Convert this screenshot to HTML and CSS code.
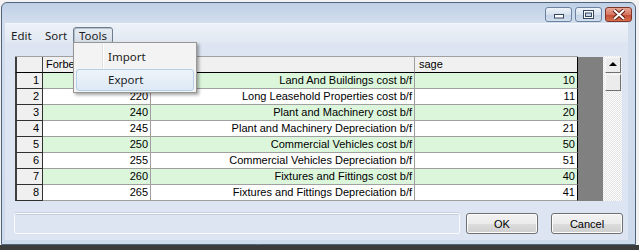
FILE: index.html
```html
<!DOCTYPE html>
<html>

<head>
    <meta charset="utf-8" />
    <title>Nominal codes</title>
    <link rel="stylesheet" href="styles.css">
</head>

<body>
    <div class="window">
        <!-- caption: only the three buttons are shown -->
        <div class="titlebar">
            <span class="cap-btn">
                <svg width="10" height="5" viewBox="0 0 10 5"><rect x="0.5" y="0.5" width="9" height="3.5" fill="#fff" stroke="#34465e" /></svg>
            </span>
            <span class="cap-btn">
                <svg width="11" height="9" viewBox="0 0 11 9"><rect x="0.5" y="0.5" width="10" height="8" fill="#fff" stroke="#34465e" /><rect x="2.5" y="3" width="6" height="3.5" fill="#c9d6e8" stroke="#34465e" /></svg>
            </span>
            <span class="cap-btn close">
                <svg width="14" height="11" viewBox="0 0 14 11"><path d="M2 1 L12 10 M12 1 L2 10" stroke="#5b1d12" stroke-width="4" /><path d="M2 1 L12 10 M12 1 L2 10" stroke="#fff" stroke-width="2" /></svg>
            </span>
        </div>

        <div class="client">
            <div class="menubar">
                <span class="menu-item edit">Edit</span>
                <span class="menu-item sort">Sort</span>
                <span class="menu-item tools open">Tools</span>

                <!-- the Tools menu is dropped down -->
                <ul class="dropdown">
                    <li>Import</li>
                    <li class="hover">Export</li>
                </ul>
            </div>

            <div class="content">
                <div class="grid">
                    <table class="data">
                        <colgroup>
                            <col class="c-rh">
                            <col class="c-code">
                            <col class="c-name">
                            <col class="c-sage">
                        </colgroup>
                        <tr class="head">
                            <th class="corner"></th>
                            <th>Forbe</th>
                            <th></th>
                            <th>sage</th>
                        </tr>
                        <tr class="alt">
                            <td class="rh">1</td>
                            <td class="num"></td>
                            <td class="num">Land And Buildings cost b/f</td>
                            <td class="num">10</td>
                        </tr>
                        <tr>
                            <td class="rh">2</td>
                            <td class="num">220</td>
                            <td class="num">Long Leasehold Properties cost b/f</td>
                            <td class="num">11</td>
                        </tr>
                        <tr class="alt">
                            <td class="rh">3</td>
                            <td class="num">240</td>
                            <td class="num">Plant and Machinery cost b/f</td>
                            <td class="num">20</td>
                        </tr>
                        <tr>
                            <td class="rh">4</td>
                            <td class="num">245</td>
                            <td class="num">Plant and Machinery Depreciation b/f</td>
                            <td class="num">21</td>
                        </tr>
                        <tr class="alt">
                            <td class="rh">5</td>
                            <td class="num">250</td>
                            <td class="num">Commercial Vehicles cost b/f</td>
                            <td class="num">50</td>
                        </tr>
                        <tr>
                            <td class="rh">6</td>
                            <td class="num">255</td>
                            <td class="num">Commercial Vehicles Depreciation b/f</td>
                            <td class="num">51</td>
                        </tr>
                        <tr class="alt">
                            <td class="rh">7</td>
                            <td class="num">260</td>
                            <td class="num">Fixtures and Fittings cost b/f</td>
                            <td class="num">40</td>
                        </tr>
                        <tr>
                            <td class="rh">8</td>
                            <td class="num">265</td>
                            <td class="num">Fixtures and Fittings Depreciation b/f</td>
                            <td class="num">41</td>
                        </tr>
                    </table>
                    <div class="filler"></div>
                    <div class="vscroll">
                        <span class="sb-btn up"></span>
                        <span class="sb-btn thumb"></span>
                    </div>
                </div>

                <div class="footer">
                    <div class="status"></div>
                    <button type="button" class="btn ok">OK</button>
                    <button type="button" class="btn cancel">Cancel</button>
                </div>
            </div>
        </div>
    </div>
</body>

</html>
```

FILE: styles.css
```css
body {
  margin: 0;
  height: 250px;
  /* what is behind the window: light on the right, dark below */
  background: linear-gradient(to bottom, #f2f2f2 245px, #3b3b3b 245px);
  font: 11px "Liberation Sans", Arial, sans-serif;
}

.window {
  box-sizing: border-box;
  width: 635px;
  height: 243px;
  margin: 2px 0 0 1px;
  border: 1px solid #51647d;
  border-radius: 6px 6px 0 0;
  background: linear-gradient(to bottom, #bfd0e6, #d2deee 20px, #cddaeb);
}

/* title bar */
.titlebar {
  height: 20px;
  display: flex;
  justify-content: flex-end;
  align-items: flex-start;
  padding: 4px 3px 0 0;
  box-sizing: border-box;
  gap: 3px;
}

.cap-btn {
  box-sizing: border-box;
  width: 27px;
  height: 15px;
  border: 1px solid #6a819f;
  border-radius: 3px;
  background: linear-gradient(to bottom, #eef3f9, #d6e1ee 50%, #c3d2e6 51%, #d3dfee);
  display: flex;
  align-items: center;
  justify-content: center;
}

.cap-btn:first-child svg {
  margin-top: 4px;
}

.cap-btn.close {
  border-color: #7e3427;
  background: linear-gradient(to bottom, #e9a797, #d67562 50%, #c44a33 51%, #d5704f);
}

.client {
  height: 217px;
  margin: 0 7px 0 3px;
  background: #dce5f1;
}

/* menu strip */
.menubar {
  position: relative;
  height: 20px;
  box-sizing: border-box;
  padding-top: 3px;
  display: flex;
  align-items: flex-start;
  border-top: 1px solid #f3f6fb;
  background: linear-gradient(to bottom, #edf2f8, #e1e8f2);
  font: 11.5px "Noto Sans", "Liberation Sans", sans-serif;
  color: #1c1c24;
}

.menu-item {
  box-sizing: border-box;
  height: 17px;
  line-height: 15px;
  padding-left: 5px;
  border: 1px solid transparent;
}

.edit {
  width: 30px;
}

.sort {
  width: 31px;
  margin-left: 4px;
}

.tools {
  width: 40px;
  margin-left: 3px;
}

.tools.open {
  border-color: #6e7c8e;
  border-radius: 3px;
  background: linear-gradient(to bottom, #e8edf3, #d5dde7);
  box-shadow: inset 1px 1px 0 #b4bfcc;
}

.dropdown {
  position: absolute;
  left: 68px;
  top: 18px;
  width: 124px;
  height: 51px;
  box-sizing: border-box;
  margin: 0;
  padding: 3px 2px 1px;
  list-style: none;
  border: 1px solid #979797;
  background: #f3f3f3;
  box-shadow: 2px 2px 3px rgba(0, 0, 0, 0.35);
}

/* the icon gutter of the menu */
.dropdown::before {
  content: "";
  position: absolute;
  left: 28px;
  top: 1px;
  bottom: 1px;
  width: 1px;
  border-right: 1px solid #fff;
  background: #e0e0e0;
}

.dropdown li {
  position: relative;
  box-sizing: border-box;
  height: 22px;
  line-height: 20px;
  padding-left: 31px;
  border: 1px solid transparent;
}

.dropdown li + li {
  margin-top: 1px;
}

.dropdown li.hover {
  border-color: #b4d0e6;
  border-radius: 3px;
  background: linear-gradient(to bottom, #eef4fa, #dde9f5);
}

/* form body */
.content {
  padding: 13px 6px 0 10px;
}

.grid {
  display: flex;
  height: 145px;
}

.data {
  border-collapse: separate;
  border-spacing: 0;
  table-layout: fixed;
  width: 563px;
  border-top: 1px solid #a0a0a0;
}

.c-rh {
  width: 28px;
}

.c-code {
  width: 108px;
}

.c-name {
  width: 264px;
}

.c-sage {
  width: 163px;
}

.data th,
.data td {
  box-sizing: border-box;
  height: 16px;
  padding: 0 2px;
  line-height: 15px;
  white-space: nowrap;
  overflow: hidden;
  border-right: 1px solid #a0a0a0;
  border-bottom: 1px solid #a0a0a0;
  font-weight: normal;
  color: #000;
  background: #fff;
}

.data .head th {
  background: #f0f0f0;
  text-align: left;
  padding-left: 3px;
  border-bottom-color: #000;
}

.data .head th:last-child {
  padding-left: 4px;
  border-right-color: #000;
}

.data .head th.corner {
  border-left: 2px solid #404040;
  border-right-color: #404040;
}

.data td.rh {
  background: #f0f0f0;
  text-align: right;
  padding-right: 3px;
  border-left: 2px solid #404040;
  border-right-color: #303030;
  border-bottom-color: #303030;
}

.data td.num {
  text-align: right;
}

.data td:last-child {
  border-right-color: #000;
}

.data tr.alt td {
  background: #dcf6dc;
}

.data tr.alt td.rh {
  background: #f0f0f0;
}

.filler {
  width: 25px;
  margin-top: 1px;
  background: #808080;
}

.vscroll {
  width: 19px;
  box-sizing: border-box;
  padding: 1px 1px 0 2px;
  background: repeating-conic-gradient(#fdfdfd 0 25%, #e4e4e4 0 50%) 0 0 / 2px 2px;
}

.sb-btn {
  display: block;
  box-sizing: border-box;
  height: 16px;
  border: 1px solid;
  border-color: #f8f8f8 #707070 #707070 #f8f8f8;
  background: #ececec;
}

.sb-btn.thumb {
  margin-top: 1px;
  height: 17px;
}

.sb-btn.up {
  position: relative;
}

/* up arrow */
.sb-btn.up::after {
  content: "";
  position: absolute;
  left: 3px;
  top: 4px;
  border-left: 4px solid transparent;
  border-right: 4px solid transparent;
  border-bottom: 4px solid #000;
}

.footer {
  display: flex;
  margin: 12px -1px 0 -1px;
}

.status {
  box-sizing: border-box;
  width: 446px;
  height: 21px;
  border: 1px solid #f9fbfd;
  border-radius: 2px;
  box-shadow: inset 0 1px 0 #c6d0dc, 0 -1px 0 #c9d3df;
}

.btn {
  box-sizing: border-box;
  width: 72px;
  height: 21px;
  padding: 0;
  border: 1px solid #707070;
  border-radius: 3px;
  background: linear-gradient(to bottom, #f3f3f3, #ebebeb 50%, #dddddd 51%, #cfcfcf);
  box-shadow: inset 0 0 0 1px #fcfcfc;
  font: 11px "Liberation Sans", Arial, sans-serif;
  color: #000;
}

.ok {
  margin-left: 6px;
}

.cancel {
  margin-left: 13px;
}
```
